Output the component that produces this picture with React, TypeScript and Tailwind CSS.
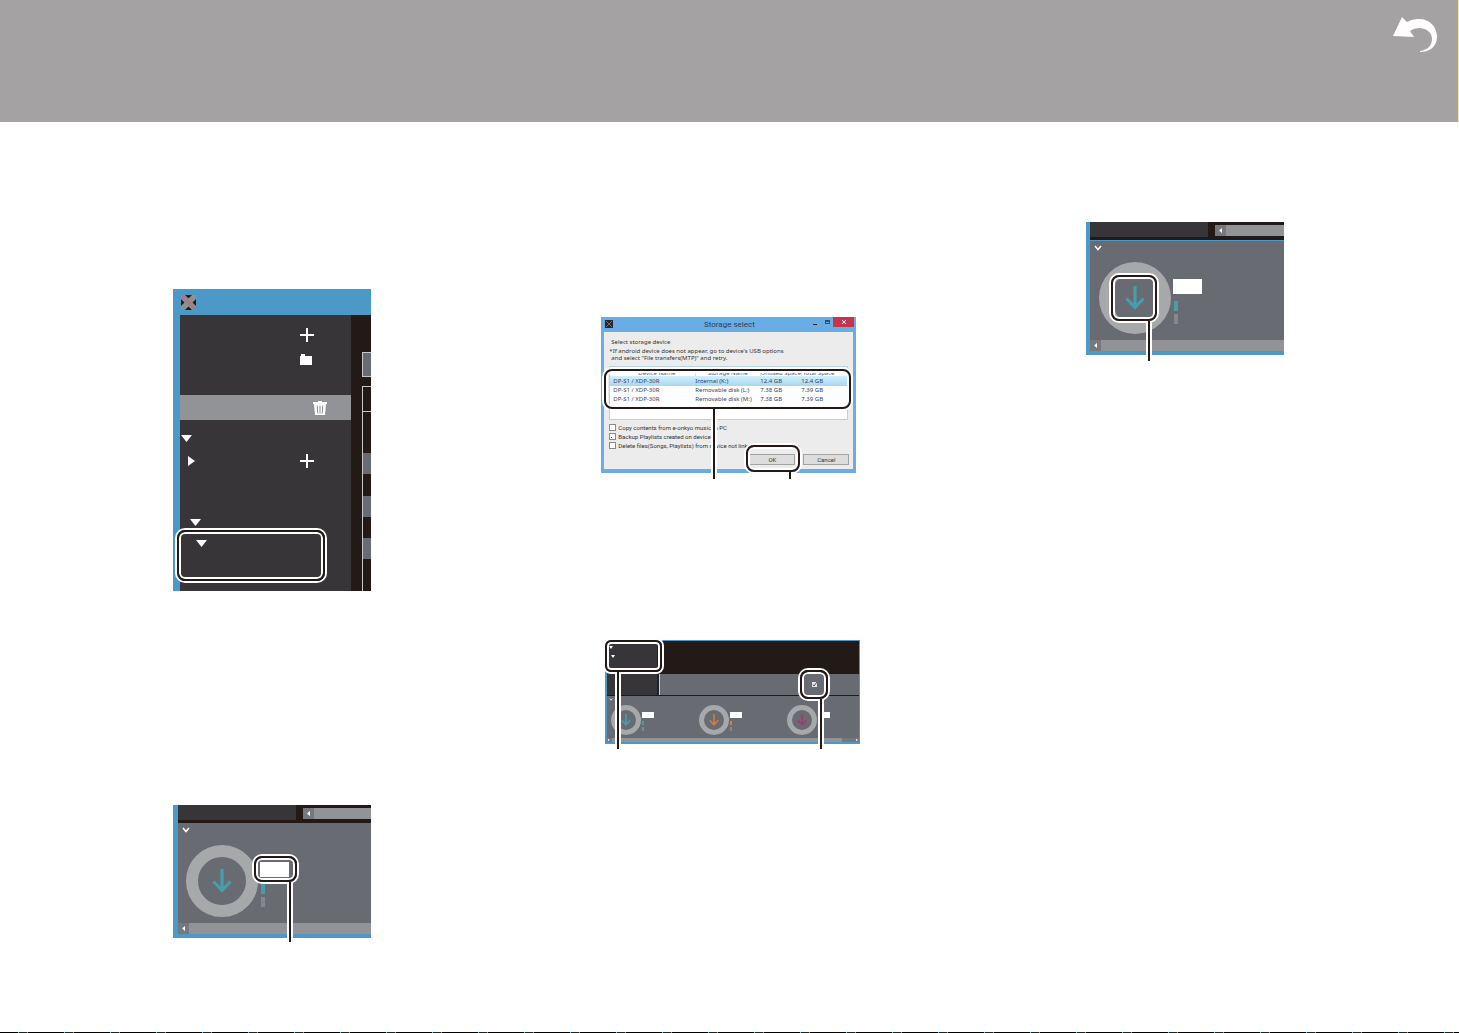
import type { ReactNode } from 'react';
import clsx from 'clsx';

const storages = [
  { device: 'DP-S1 / XDP-30R', name: 'Internal (K:)', unused: '12.4 GB', total: '12.4 GB' },
  { device: 'DP-S1 / XDP-30R', name: 'Removable disk (L:)', unused: '7.38 GB', total: '7.39 GB' },
  { device: 'DP-S1 / XDP-30R', name: 'Removable disk (M:)', unused: '7.38 GB', total: '7.39 GB' },
];

const options = [
  { id: 'copy', label: 'Copy contents from e-onkyo music to PC', dot: false },
  { id: 'backup', label: 'Backup Playlists created on device', dot: true },
  { id: 'delete', label: 'Delete files(Songs, Playlists) from device not linked with library', dot: false },
];

const transfers = [
  { id: 'internal', color: 'text-[#459faa]', bar: 'bg-[#459faa]' },
  { id: 'card1', color: 'text-[#d07f3c]', bar: 'bg-[#d07f3c]' },
  { id: 'card2', color: 'text-[#a8376b]', bar: 'bg-[#696b73]' },
];

// Rounded black frame with a white edge on both sides
const Callout = ({ className }: { className: string }) => (
  <div
    className={clsx(
      'pointer-events-none absolute border-2 border-[#231916] ring-2 ring-white inset-ring-2 inset-ring-white',
      className
    )}
  />
);

const Leader = ({ className }: { className: string }) => (
  <div className={clsx('pointer-events-none absolute w-1.5 border-x-2 border-white bg-[#231916]', className)} />
);

const Triangle = ({ right = false, className = 'h-[7px] w-[11px]' }: { right?: boolean; className?: string }) => (
  <svg viewBox="0 0 10 6" preserveAspectRatio="none" className={className} fill="#fff">
    <path d={right ? 'M0 0 10 3 0 6Z' : 'M0 0H10L5 6Z'} />
  </svg>
);

const Chevron = ({ className }: { className: string }) => (
  <svg viewBox="0 0 8 6" className={className} fill="none" stroke="#fff" strokeWidth="1.5">
    <path d="M1 1 4 4.5 7 1" />
  </svg>
);

const DownArrow = ({ className }: { className: string }) => (
  <svg viewBox="0 0 20 24" className={className} fill="none" stroke="currentColor" strokeWidth="3.2">
    <path d="M10 0V21M1.5 12.5 10 21.5 18.5 12.5" />
  </svg>
);

const AppLogo = ({ className }: { className: string }) => (
  <svg viewBox="0 0 15 15" className={className}>
    <rect width="15" height="15" rx="1.5" fill="#231916" />
    <path d="M11 0h4v4L4 15H0v-4Z" fill="#8f9094" />
    <path d="M0 0h4l11 11v4h-4L0 4Z" fill="#8f9094" />
    <path d="M0 0 15 15" stroke="#b96c83" strokeWidth="2" strokeDasharray="1 1" />
    <path d="M2 0 15 13M0 2 13 15" stroke="#a5716f" strokeWidth="1" strokeDasharray="1 1" />
  </svg>
);

// Small dark version of the logo used in the dialog's title bar
const DialogLogo = () => (
  <svg viewBox="0 0 8 8" className="h-2 w-2">
    <rect width="8" height="8" fill="#2a2626" />
    <path d="M1 1 7 7M7 1 1 7" stroke="#77706f" strokeWidth="1" />
  </svg>
);

const PlusButton = () => (
  <button type="button" aria-label="Add" className="h-3.5 w-3.5">
    <svg viewBox="0 0 14 14" stroke="#fff" strokeWidth="2">
      <path d="M7 0V14M0 7H14" />
    </svg>
  </button>
);

const ScrollBar = ({ className }: { className?: string }) => (
  <div className={clsx('flex h-[11px] bg-[#929397]', className)}>
    <button
      type="button"
      aria-label="Scroll left"
      className="flex h-[11px] w-[11px] items-center justify-center bg-[#77787d]"
    >
      <svg viewBox="0 0 3 5" className="h-[5px] w-[3px]" fill="#fff">
        <path d="M3 0V5L0 2.5Z" />
      </svg>
    </button>
  </div>
);

const LibraryTree = () => (
  <figure className="relative flex h-[302px] w-[198px] flex-col bg-[#4c99c8]">
    <header className="flex h-[26px] items-center pl-2">
      <AppLogo className="h-[15px] w-[15px]" />
    </header>
    <div className="flex flex-1 pl-[7px]">
      <nav className="flex w-[171px] flex-col bg-[#383538] pt-2">
        <div className="flex h-6 items-center pl-[120px]">
          <PlusButton />
        </div>
        <div className="flex h-6 items-center pl-[120px]">
          <button type="button" aria-label="New folder" className="h-[11px] w-3">
            <svg viewBox="0 0 12 11" fill="#fff">
              <path d="M1 0H5V2H12V11H0V2H1Z" />
            </svg>
          </button>
        </div>
        <div className="mt-6 flex h-[25px] items-center bg-[#929397] pl-[133px]">
          <button type="button" aria-label="Delete" className="h-3.5 w-3.5">
            <svg viewBox="0 0 14 14" fill="#fff">
              <path d="M5 0H9V1H14V3H0V1H5Z" />
              <path d="M1 3H13L12 14H2Z" />
              <path d="M4.2 4.5 4.7 12.5M7 4.5V12.5M9.8 4.5 9.3 12.5" stroke="#929397" />
            </svg>
          </button>
        </div>
        <div className="mt-1.5 flex h-6 items-center pl-px">
          <Triangle />
        </div>
        <div className="flex h-[22px] items-center pl-2">
          <Triangle right className="h-2.5 w-[7px]" />
          <div className="flex pl-[105px]">
            <PlusButton />
          </div>
        </div>
        <div className="mt-[39px] flex h-[22px] items-center pl-2.5">
          <Triangle />
        </div>
        <div className="flex h-5 items-center pl-4">
          <Triangle />
        </div>
      </nav>
      <div className="flex flex-1 flex-col bg-[#231916] pt-[37px] pl-[11px]">
        <div className="h-[25px] border border-r-0 border-[#c9c9c9] bg-[#696b73]" />
        <div className="mt-[9px] flex flex-1 flex-col border-t border-l border-[#c9c9c9]">
          <div className="h-[25px] border-b border-[#c9c9c9]" />
          <div className="mt-[41px] h-[21px] bg-[#696b73]" />
          <div className="mt-[22px] h-[21px] bg-[#696b73]" />
          <div className="mt-[21px] h-[21px] bg-[#696b73]" />
        </div>
      </div>
    </div>
    <Callout className="top-[241px] left-1 h-[51px] w-[148px] rounded-lg" />
  </figure>
);

type PanelProps = {
  filled?: boolean;
  lined?: boolean;
  children: ReactNode;
};

// Transfer area of the main window. `filled` draws the dial as a full disc.
const TransferPanel = ({ filled = false, lined = false, children }: PanelProps) => (
  <figure
    className={clsx(
      'relative flex h-[133px] w-[198px] flex-col border-b-4 border-[#4c99c8]',
      lined ? 'border-l-4' : 'border-l-[5px]'
    )}
  >
    <div className="flex h-[18px] bg-[#231916]">
      <div className="h-[15px] w-[118px] bg-[#383538]" />
      <ScrollBar className="mt-[3px] ml-[7px] flex-1" />
    </div>
    <div
      className={clsx(
        'flex flex-1 flex-col bg-[#696b73] pt-1',
        lined && 'border-t border-[#4c99c8]'
      )}
    >
      <Chevron className="ml-1 h-1.5 w-2" />
      <div className={clsx('flex gap-0.5', lined ? 'mt-[11px] pl-[9px]' : 'mt-3 pl-2')}>
        <div
          className={clsx(
            'flex h-[72px] w-[72px] items-center justify-center rounded-full text-[#459faa]',
            filled ? 'bg-[#a7a8aa]' : 'border-12 border-[#a7a8aa]'
          )}
        >
          <div className={clsx('flex items-center justify-center', filled && 'h-10 w-10 rounded-lg bg-[#696b73]')}>
            <DownArrow className="h-6 w-5" />
          </div>
        </div>
        <div className="flex flex-col pt-[17px]">
          <button type="button" aria-label="Select" className="h-[15px] w-[29px] bg-white" />
          <div className="mt-[7px] ml-px h-2.5 w-1 bg-[#459faa]" />
          <div className="mt-[3px] ml-px h-2.5 w-1 bg-[#86878a]" />
        </div>
      </div>
    </div>
    <ScrollBar />
    {children}
  </figure>
);

const StorageDialog = () => (
  <figure className="relative flex h-[156px] w-[255px] flex-col bg-[#6aade4] px-[3px] pb-1 font-['Roboto','Liberation_Sans',sans-serif]">
    <header className="flex h-[15px] items-start">
      <div className="flex flex-1 items-center pt-[3px] pl-px">
        <DialogLogo />
      </div>
      <h2 className="text-[8px] leading-[15px] text-[#2b4058]">Storage select</h2>
      <div className="flex flex-1 justify-end">
        <button type="button" aria-label="Minimize" className="flex h-2.5 w-3 items-center">
          <span className="mt-1 h-px w-1 bg-[#222222]" />
        </button>
        <button type="button" aria-label="Maximize" className="flex h-2.5 w-2 items-center">
          <span className="h-1 w-[5px] border border-t-2 border-[#33506e]" />
        </button>
        <button
          type="button"
          aria-label="Close"
          className="-mr-px flex h-2.5 w-[21px] items-center justify-center bg-[#c8354a]"
        >
          <svg viewBox="0 0 4 4" className="h-1 w-1" stroke="#fff">
            <path d="M0 0 4 4M4 0 0 4" />
          </svg>
        </button>
      </div>
    </header>
    <div className="flex flex-1 flex-col bg-[#ececec] px-[5px] pt-1.5 text-[6px] leading-[8px] text-[#333333]">
      <div className="font-['Noto_Sans','Liberation_Sans',sans-serif]">
        <p className="pl-0.5">Select storage device</p>
        <p className="mt-px">*If android device does not appear, go to device's USB options</p>
        <p className="-mt-px pl-0.5">and select "File transfers(MTP)" and retry.</p>
      </div>
      <div className="mt-1 h-[54px] border border-[#b5d3e2] bg-white font-['Noto_Sans','Liberation_Sans',sans-serif]">
        <table className="w-full table-fixed border-collapse text-left text-[#34406e]">
          <colgroup>
            <col className="w-[85px]" />
            <col className="w-[65px]" />
            <col className="w-[41px]" />
            <col />
          </colgroup>
          <thead>
            <tr className="h-[9px] text-center align-bottom leading-[5px] text-[#555555]">
              <th className="border-r border-[#dddddd] pl-7 text-left align-bottom font-normal">Device Name</th>
              <th className="border-r border-[#dddddd] align-bottom font-normal">Storage Name</th>
              <th className="border-r border-[#dddddd] align-bottom font-normal whitespace-nowrap">Unused Space</th>
              <th className="pr-3 align-bottom font-normal whitespace-nowrap">Total Space</th>
            </tr>
          </thead>
          <tbody>
            {storages.map((s, i) => (
              <tr
                key={s.name}
                className={clsx(
                  i === 0 ? 'h-2.5 bg-linear-to-b from-[#d5eefa] to-[#a5d8ef] leading-[10px]' : 'h-[9px] leading-[9px]'
                )}
              >
                <td className="pl-[3px]">{s.device}</td>
                <td className="whitespace-nowrap">{s.name}</td>
                <td>{s.unused}</td>
                <td>{s.total}</td>
              </tr>
            ))}
          </tbody>
        </table>
      </div>
      <div className="mt-[3px] flex flex-col">
        {options.map((o) => (
          <label key={o.id} htmlFor={o.id} className="flex h-[9px] items-center gap-0.5 whitespace-nowrap">
            <input
              id={o.id}
              type="checkbox"
              className={clsx(
                'h-[7px] w-[7px] shrink-0 appearance-none border border-[#8a8a8a] bg-white',
                o.dot && 'bg-[linear-gradient(#444444,#444444)] bg-size-[1px_1px] bg-position-[1px_3px] bg-no-repeat'
              )}
            />
            {o.label}
          </label>
        ))}
      </div>
      <div className="mt-1 flex justify-end gap-2">
        <button type="button" className="h-[11px] w-[46px] border border-[#a3a3a3] bg-[#dddddd] leading-[9px]">
          OK
        </button>
        <button type="button" className="-mr-px h-[11px] w-[46px] border border-[#a3a3a3] bg-[#dddddd] leading-[9px]">
          Cancel
        </button>
      </div>
    </div>
    <Callout className="top-[52px] left-[3px] h-10 w-[247px] rounded-lg" />
    <Leader className="top-[92px] left-[110px] h-[70px]" />
    <Callout className="top-[128px] left-[145px] h-[27px] w-[54px] rounded-lg" />
    <Leader className="top-[155px] left-[186px] h-[7px]" />
  </figure>
);

const SyncOverview = () => (
  <figure className="relative ml-1 flex h-[104px] w-[255px] flex-col border border-b-2 border-l-2 border-[#4c99c8] bg-[#696b73]">
    <div className="flex h-[55px] border-b border-[#231916]">
      <div className="flex w-[50px] flex-col gap-1.5 bg-[#383538] pt-[5px] pl-0.5">
        <Triangle className="h-[3px] w-1" />
        <Triangle className="ml-0.5 h-[3px] w-1" />
      </div>
      <div className="w-0.5 bg-[#1d2230]" />
      <div className="flex flex-1 flex-col">
        <div className="h-[33px] bg-[#231916]" />
        <div className="flex flex-1 items-center justify-end border-l border-[#d0d0d0] pr-[42px]">
          <button type="button" aria-label="Sync" className="h-[5px] w-[5px] bg-[#e5e5e5]">
            <svg viewBox="0 0 5 5" fill="none" stroke="#555" strokeWidth="1">
              <path d="M1 2.5 2 4 5 0" />
            </svg>
          </button>
        </div>
      </div>
    </div>
    <div className="flex flex-1 flex-col pt-0.5">
      <Chevron className="ml-0.5 h-[3px] w-1" />
      <div className="mt-1 flex pl-1">
        {transfers.map((t) => (
          <div key={t.id} className="flex w-[88px] shrink-0 gap-px">
            <div
              className={clsx(
                'flex h-[30px] w-[30px] items-center justify-center rounded-full border-5 border-[#a7a8aa]',
                t.color
              )}
            >
              <DownArrow className="h-3 w-2.5" />
            </div>
            <div className="flex flex-col pt-[7px]">
              <button type="button" aria-label="Select" className="h-1.5 w-3 bg-white" />
              <div className={clsx('mt-[3px] h-1 w-0.5', t.bar)} />
              <div className="mt-0.5 h-1 w-0.5 bg-[#86878a]" />
            </div>
          </div>
        ))}
      </div>
    </div>
    <div className="flex h-1 items-center justify-between bg-[#77787d] px-px">
      <Triangle right className="h-0.5 w-0.5" />
      <div className="ml-0.5 h-1 w-[230px] bg-[#929397]" />
      <div className="flex-1" />
      <Triangle right className="h-0.5 w-0.5" />
    </div>
    <Callout className="-top-px -left-0.5 h-8 w-[57px] rounded-md" />
    <Leader className="top-[31px] left-2 h-[77px]" />
    <Callout className="top-[29px] left-[193px] h-[29px] w-7 rounded-lg" />
    <Leader className="top-[58px] left-[211px] h-[50px]" />
  </figure>
);

export default function App() {
  return (
    <div className="flex min-h-screen flex-col bg-white">
      <header className="flex h-[122px] justify-end border-r border-[#f3ee9a] bg-[#a5a2a3] pt-[17px] pr-5">
        <a href="#back" aria-label="Back" className="h-9 w-[46px]">
          <svg viewBox="0 0 46 36" fill="#fff">
            <path d="M1 19 10 0 15 5Q20 2 27 2C38 2 45 10 45 20C45 29 38 35 28 35V34C36 33 40 28 40 22C40 15 34 11 27 11Q22 11 18 14L22 20Z" />
          </svg>
        </a>
      </header>

      <main className="grid flex-1 grid-cols-3">
        <section className="flex flex-col gap-[214px] pt-[167px] pl-[173px]">
          <LibraryTree />
          <TransferPanel>
            <Callout className="top-[51px] left-[76px] h-[26px] w-[43px] rounded-lg" />
            <Leader className="top-[77px] left-[109px] h-[60px]" />
          </TransferPanel>
        </section>
        <section className="flex flex-col gap-[167px] pt-[195px] pl-[115px]">
          <StorageDialog />
          <SyncOverview />
        </section>
        <section className="flex flex-col pt-[100px] pl-[113px]">
          <TransferPanel filled lined>
            <Callout className="top-[53px] left-[21px] h-[46px] w-[46px] rounded-lg" />
            <Leader className="top-[99px] left-14 h-10" />
          </TransferPanel>
        </section>
      </main>

      <footer className="h-px bg-[repeating-linear-gradient(90deg,#000000_0_18px,#5fc8c8_18px_19px,#222222_19px_27px,#e08040_27px_28px,#000000_28px_46px)]" />
    </div>
  );
}
